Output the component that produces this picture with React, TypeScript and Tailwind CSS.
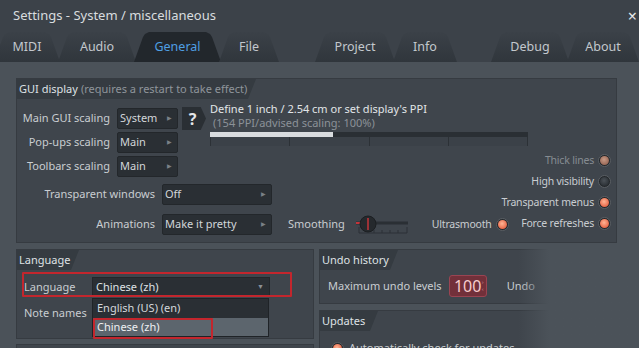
import React from 'react';

const font = { fontFamily: '"Noto Sans", "Open Sans", sans-serif' };

function Tab({ label, w, ml, active }: { label: string; w: number; ml: number; active?: boolean }) {
  return (
    <div
      style={{ width: w, marginLeft: ml }}
      className={`h-[30px] shrink-0 flex items-center justify-center text-[12.5px] [clip-path:polygon(0_100%,9px_5px,11px_2px,15px_0,calc(100%_-_15px)_0,calc(100%_-_11px)_2px,calc(100%_-_9px)_5px,100%_100%)] ${
        active ? 'bg-[#22272c] text-[#4f9fe3]' : 'bg-gradient-to-b from-[#3b4148] to-[#30363c] text-[#c3c8cd]'
      }`}
    >
      {label}
    </div>
  );
}

function Dropdown({ value, w }: { value: string; w: number }) {
  return (
    <div
      style={{ width: w }}
      className="h-[21px] shrink-0 bg-[#2a2f34] border border-[#23272b] rounded-[2px] flex items-center justify-between pl-[2px] pr-[5px] text-[11px] text-[#d2d6da]"
    >
      <span>{value}</span>
      <span className="text-[6px] text-[#7a8087]">▶</span>
    </div>
  );
}

function Radio({ kind }: { kind: 'on' | 'off' | 'dim' }) {
  const inner =
    kind === 'on'
      ? 'bg-[radial-gradient(circle_at_45%_40%,#ffb494,#e8694a_70%)]'
      : kind === 'dim'
      ? 'bg-[radial-gradient(circle_at_45%_40%,#c89a86,#9a6a58_70%)]'
      : 'bg-[radial-gradient(circle_at_45%_40%,#4b5157,#2d3237_70%)]';
  return (
    <div className="w-[13px] h-[13px] rounded-full bg-[#24282c] border border-[#5a5f64] flex items-center justify-center shrink-0">
      <div className={`w-[9px] h-[9px] rounded-full ${inner}`} />
    </div>
  );
}

function PanelHeader({ children, w }: { children: React.ReactNode; w: number }) {
  return (
    <div
      style={{ width: w }}
      className="h-[20px] bg-[#353b41] pl-[2px] flex items-center text-[11px] text-[#dfe2e5] [clip-path:polygon(0_0,100%_0,calc(100%_-_8px)_100%,0_100%)]"
    >
      {children}
    </div>
  );
}

function RadioRow({ label, kind }: { label: string; kind: 'on' | 'off' | 'dim' }) {
  return (
    <div className="h-[21px] flex items-center gap-[4px]">
      <span className={`text-[10.5px] tracking-[-0.2px] ${kind === 'dim' ? 'text-[#868c92]' : 'text-[#c9cdd1]'}`}>{label}</span>
      <Radio kind={kind} />
    </div>
  );
}

export default function App() {
  return (
    <div style={font} className="relative w-[639px] h-[348px] overflow-hidden bg-[#4b5259] text-[11px] whitespace-nowrap">
      {/* title */}
      <div className="h-[32px] bg-[#3c4249] flex items-center justify-between pl-[13px] pr-[2px]">
        <span className="text-[13px] text-[#d8dcdf]">Settings - System / miscellaneous</span>
        <span className="text-[16px] text-[#e6e8ea] leading-none">×</span>
      </div>
      {/* tabs */}
      <div className="h-[30px] bg-[#3c4249] flex items-end">
        <Tab label="MIDI" w={66} ml={-6} />
        <Tab label="Audio" w={78} ml={-2} />
        <Tab label="General" w={87} ml={-2} active />
        <Tab label="File" w={60} ml={-2} />
        <Tab label="Project" w={80} ml={36} />
        <Tab label="Info" w={64} ml={-2} />
        <Tab label="Debug" w={78} ml={34} />
        <Tab label="About" w={72} ml={-2} />
      </div>

      <div className="px-[16px] pt-[16px]">
        {/* GUI display */}
        <div className="w-[601px] h-[165px] bg-[#3f454c] border border-[#363b41]">
          <PanelHeader w={239}>
            <span>GUI display</span>
            <span className="ml-[3px] text-[#8f959b]">(requires a restart to take effect)</span>
          </PanelHeader>
          <div className="flex">
            <div className="w-[488px] shrink-0">
              <div className="flex items-start mt-[9px]">
                <div className="flex flex-col gap-[3px] shrink-0">
                  {[
                    ['Main GUI scaling', 'System'],
                    ['Pop-ups scaling', 'Main'],
                    ['Toolbars scaling', 'Main'],
                  ].map(([l, v]) => (
                    <div key={l} className="flex items-center">
                      <span className="w-[93px] shrink-0 text-right text-[#c9cdd1]">{l}</span>
                      <div className="ml-[7px]">
                        <Dropdown value={v} w={61} />
                      </div>
                    </div>
                  ))}
                </div>
                <div className="shrink-0 ml-[4px] mt-[-1px] w-[24px] h-[23px] bg-[#2a2f34] flex items-center justify-center pr-[3px] text-[16px] font-bold text-[#e4e6e8] [clip-path:polygon(0_0,78%_0,100%_50%,78%_100%,0_100%)]">
                  ?
                </div>
                <div className="shrink-0 ml-[4px] mt-[-6px] flex flex-col">
                  <span className="text-[#e2e5e8] leading-[14px]">Define 1 inch / 2.54 cm or set display's PPI</span>
                  <span className="ml-[3px] text-[#8c9298] leading-[14px]">(154 PPI/advised scaling: 100%)</span>
                  <div className="mt-[2px] w-[318px] h-[5px] bg-[#2a2f34]">
                    <div className="w-[123px] h-[5px] bg-[#d9dcdf]" />
                  </div>
                  <div className="flex w-[318px] h-[9px] bg-[#3b4148]">
                    {[0, 1, 2, 3].map((i) => (
                      <div key={i} className={`flex-1 border-l border-[#2c3136] ${i === 3 ? 'border-r' : ''}`} />
                    ))}
                  </div>
                </div>
              </div>
              <div className="flex items-center mt-[7px]">
                <span className="w-[138px] shrink-0 text-right text-[#c9cdd1]">Transparent windows</span>
                <div className="ml-[7px]">
                  <Dropdown value="Off" w={110} />
                </div>
              </div>
              <div className="flex items-center mt-[9px]">
                <span className="w-[138px] shrink-0 text-right text-[#c9cdd1]">Animations</span>
                <div className="ml-[7px]">
                  <Dropdown value="Make it pretty" w={110} />
                </div>
                <span className="ml-[16px] shrink-0 text-[#c9cdd1]">Smoothing</span>
                <svg width="56" height="20" viewBox="0 0 56 20" className="ml-[9px] shrink-0">
                  <line x1="2" y1="8" x2="54" y2="8" stroke="#2a2f34" strokeWidth="3" />
                  <line x1="2" y1="8" x2="9" y2="8" stroke="#c3343a" strokeWidth="2" />
                  <path d="M5 12v6M20 15v3M28 15v3M36 15v3M44 15v3M53 12v6M5 18h48" stroke="#2c3136" strokeWidth="1" fill="none" />
                  <circle cx="14" cy="9" r="8" fill="#25292d" stroke="#1c1f22" />
                  <line x1="14" y1="3" x2="14" y2="15" stroke="#c3343a" strokeWidth="1.5" />
                </svg>
                <span className="ml-[22px] shrink-0 text-[10.5px] tracking-[-0.2px] text-[#c9cdd1]">Ultrasmooth</span>
                <div className="ml-[4px]">
                  <Radio kind="on" />
                </div>
              </div>
            </div>
            <div className="flex-1 min-w-0 flex flex-col items-end pr-[5px] pt-[51px]">
              <RadioRow label="Thick lines" kind="dim" />
              <RadioRow label="High visibility" kind="off" />
              <RadioRow label="Transparent menus" kind="on" />
              <RadioRow label="Force refreshes" kind="on" />
            </div>
          </div>
        </div>

        {/* lower panels */}
        <div className="flex gap-[5px] mt-[6px]">
          <div className="w-[298px] flex flex-col gap-[5px]">
            <div className="relative h-[90px] bg-[#3f454c] border border-[#363b41]">
              <PanelHeader w={62}>Language</PanelHeader>
              <div className="flex items-center mt-[7px] pl-[7px]">
                <span className="w-[68px] text-[#c9cdd1]">Language</span>
                <div className="w-[178px] h-[20px] bg-[#2a2f34] border border-[#23272b] flex items-center justify-between pl-[3px] pr-[5px] text-[#dfe2e5]">
                  <span>Chinese (zh)</span>
                  <span className="text-[7px] text-[#8a9096]">▼</span>
                </div>
              </div>
              <div className="mt-[8px] pl-[7px] text-[#c9cdd1]">Note names</div>
              <div className="absolute left-[75px] top-[48px] w-[177px] bg-[#2a2f34] border border-[#1f2327] text-[#d4d8dc]">
                <div className="h-[19px] flex items-center pl-[4px]">English (US) (en)</div>
                <div className="h-[18px] flex items-center pl-[4px] bg-[#5c656d] text-[#eef0f2]">Chinese (zh)</div>
              </div>
              <div className="absolute left-[5px] top-[22px] w-[270px] h-[25px] border-2 border-[#c3262d] rounded-[1px]" />
              <div className="absolute left-[76px] top-[68px] w-[120px] h-[21px] border-2 border-[#c3262d] rounded-[1px]" />
            </div>
            <div className="h-[20px] bg-[#3f454c] border border-[#363b41]" />
          </div>
          <div className="relative flex-1 flex flex-col gap-[6px]">
            <div className="h-[55px] bg-[#3f454c] border border-[#363b41]">
              <PanelHeader w={78}>Undo history</PanelHeader>
              <div className="flex items-center mt-[5px] pl-[8px]">
                <span className="text-[#c9cdd1]">Maximum undo levels</span>
                <div className="ml-[7px] w-[38px] h-[22px] rounded-[3px] bg-[#72303a] border border-[#9a4452] flex items-center justify-center text-[16px] text-[#f6cccc] relative">
                  100
                  <span className="absolute right-[2px] top-[3px] text-[6px] text-[#c98a92] leading-[7px]">›<br />‹</span>
                </div>
                <span className="ml-[20px] text-[#c9cdd1]">Undo</span>
              </div>
            </div>
            <div className="h-[60px] bg-[#3f454c] border border-[#363b41]">
              <PanelHeader w={58}>Updates</PanelHeader>
              <div className="flex items-center gap-[5px] mt-[9px] pl-[11px]">
                <Radio kind="on" />
                <span className="text-[#c9cdd1]">Automatically check for updates</span>
              </div>
            </div>
            <div className="absolute left-[200px] top-0 w-[120px] h-[110px] bg-gradient-to-r from-transparent from-0% to-[#4b5259] to-25%" />
          </div>
        </div>
      </div>
    </div>
  );
}
